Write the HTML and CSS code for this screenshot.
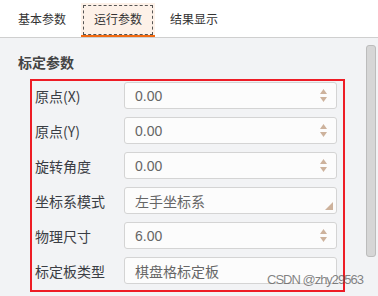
FILE: index.html
```html
<!DOCTYPE html>
<html lang="zh-CN">
<head>
  <meta charset="UTF-8" />
  <title>运行参数</title>
  <link rel="stylesheet" href="styles.css">
</head>
<body>

  <div class="tabs">
    <div class="tab">基本参数</div>
    <div class="tab active">运行参数</div>
    <div class="tab">结果显示</div>
  </div>

  <div class="panel">
    <div class="form">
      <h2 class="section-title">标定参数</h2>

      <div class="params">
        <div class="row">
          <label>原点(X)</label>
          <div class="field">
            <span class="value">0.00</span>
            <svg class="spin" width="7" height="13" viewBox="0 0 7 13"><polygon points="3.5,0 7,5 0,5" /><polygon points="0,8 7,8 3.5,13" /></svg>
          </div>
        </div>
        <div class="row">
          <label>原点(Y)</label>
          <div class="field">
            <span class="value">0.00</span>
            <svg class="spin" width="7" height="13" viewBox="0 0 7 13"><polygon points="3.5,0 7,5 0,5" /><polygon points="0,8 7,8 3.5,13" /></svg>
          </div>
        </div>
        <div class="row">
          <label>旋转角度</label>
          <div class="field">
            <span class="value">0.00</span>
            <svg class="spin" width="7" height="13" viewBox="0 0 7 13"><polygon points="3.5,0 7,5 0,5" /><polygon points="0,8 7,8 3.5,13" /></svg>
          </div>
        </div>
        <div class="row">
          <label>坐标系模式</label>
          <div class="field select">
            <span class="value">左手坐标系</span>
            <svg class="corner" width="8" height="8" viewBox="0 0 8 8"><polygon points="8,0 8,8 0,8" /></svg>
          </div>
        </div>
        <div class="row">
          <label>物理尺寸</label>
          <div class="field">
            <span class="value">6.00</span>
            <svg class="spin" width="7" height="13" viewBox="0 0 7 13"><polygon points="3.5,0 7,5 0,5" /><polygon points="0,8 7,8 3.5,13" /></svg>
          </div>
        </div>
        <div class="row">
          <label>标定板类型</label>
          <div class="field select">
            <span class="value">棋盘格标定板</span>
          </div>
        </div>
      </div>
    </div>

    <div class="scroll"><div class="thumb"></div></div>
  </div>

  <div class="watermark">CSDN @zhy29563</div>

</body>
</html>
```

FILE: styles.css
```css
body {
  margin: 0;
  width: 378px;
  height: 296px;
  overflow: hidden;
  background: #f2f3f5;
  font-family: "Noto Sans CJK SC", "Liberation Sans", sans-serif;
  color: #333;
  position: relative;
}
.tabs {
  display: flex;
  gap: 2px;
  height: 37px;
  padding-left: 5px;
  background: #fff;
  border-bottom: 1px solid #cfcfcf;
}
.tab {
  padding: 0 13px;
  font-size: 12px;
  line-height: 37px;
  color: #333;
}
.tab.active {
  margin-top: 3px;
  height: 32px;
  line-height: 31px;
  background: #fdf1e8;
  border-bottom: 2px solid #f26a10;
  outline: 1px dashed #555;
  outline-offset: -3px;
}
.panel {
  display: flex;
}
.form {
  flex: 1;
  padding-left: 18px;
}
.section-title {
  margin: 14px 0 7px;
  font-size: 14px;
  line-height: 20px;
  font-weight: bold;
  color: #444;
}
.params {
  width: 315px;
  box-sizing: border-box;
  margin-left: 12px;
  padding: 1px 6px 6px 3px;
  border: 2px solid #ee1c25;
}
.row {
  display: flex;
  align-items: center;
  margin-bottom: 8px;
}
.row:last-child {
  margin-bottom: 0;
}
.row label {
  width: 89px;
  font-size: 14px;
  color: #3a3d44;
}
.field {
  flex: 1;
  position: relative;
  display: flex;
  align-items: center;
  height: 27px;
  box-sizing: border-box;
  padding: 0 9px 0 10px;
  background: #fcfcfc;
  border: 1px solid #d4d4d4;
  border-radius: 3px;
}
.value {
  flex: 1;
  font-family: "Liberation Sans", "Noto Sans CJK SC", sans-serif;
  font-size: 14px;
  color: #666;
}
.select .value {
  font-family: "Noto Sans CJK SC", sans-serif;
}
.spin polygon,
.corner polygon {
  fill: #cdb29c;
}
.corner {
  position: absolute;
  right: 3px;
  bottom: 3px;
}
.scroll {
  width: 10px;
  margin: 7px 2px 0 4px;
}
.thumb {
  height: 212px;
  box-sizing: border-box;
  background: #d6d6d6;
  border: 1px solid #bcbcbc;
  border-radius: 3px;
}
.watermark {
  position: absolute;
  left: 267px;
  top: 272px;
  font-family: "Liberation Sans", sans-serif;
  font-size: 13px;
  letter-spacing: -1px;
  color: rgba(90, 90, 90, 0.75);
}
```
